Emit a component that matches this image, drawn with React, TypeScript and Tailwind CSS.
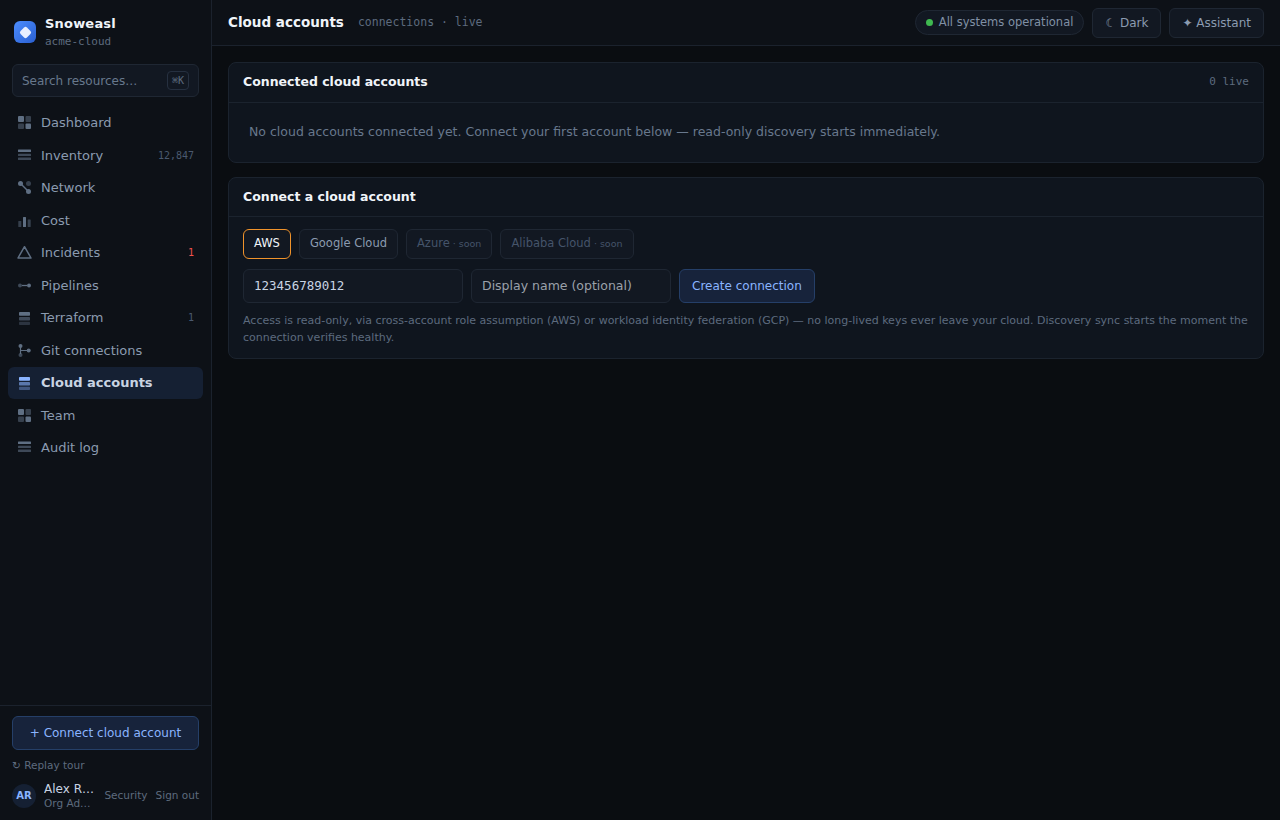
import React from "react";

const mono = "font-['DejaVu_Sans_Mono',monospace]";

function Grid() {
  return (
    <>
      <rect x="1" y="1" width="6" height="6" rx="1" />
      <rect x="8.5" y="1" width="5.5" height="6" rx="1" opacity=".5" />
      <rect x="1" y="8.5" width="6" height="5.5" rx="1" opacity=".5" />
      <rect x="8.5" y="8.5" width="5.5" height="5.5" rx="1" />
    </>
  );
}

function Lines() {
  return (
    <>
      <rect x="1" y="1.5" width="13" height="2.5" rx=".5" />
      <rect x="1" y="5.75" width="13" height="2.25" rx=".5" opacity=".6" />
      <rect x="1" y="9.5" width="13" height="2.5" rx=".5" opacity=".6" />
    </>
  );
}

function Stack() {
  return (
    <>
      <rect x="2" y="2" width="11" height="3.7" rx=".7" />
      <rect x="2" y="7" width="11" height="3.4" rx=".7" opacity=".6" />
      <rect x="2" y="11.8" width="11" height="3.2" rx=".7" opacity=".38" />
    </>
  );
}

function Network() {
  return (
    <>
      <circle cx="3.5" cy="3.5" r="2.5" />
      <circle cx="11.5" cy="3.5" r="2.5" opacity=".5" />
      <circle cx="11.5" cy="11.5" r="2.5" />
      <path d="M3.5 3.5l8 8" stroke="currentColor" strokeWidth="1.4" />
    </>
  );
}

function Bars() {
  return (
    <>
      <rect x="1.3" y="8" width="3" height="6" rx=".5" opacity=".5" />
      <rect x="6" y="4" width="3" height="10" rx=".5" />
      <rect x="10.7" y="6.5" width="3" height="7.5" rx=".5" opacity=".5" />
    </>
  );
}

function Triangle() {
  return <path d="M7.5 1.7L14 13H1z" fill="none" stroke="currentColor" strokeWidth="1.5" strokeLinejoin="round" />;
}

function Pipeline() {
  return (
    <>
      <circle cx="3" cy="7.5" r="2" opacity=".6" />
      <circle cx="12" cy="7.5" r="2" />
      <path d="M5 7.5h5" stroke="currentColor" strokeWidth="1.3" />
    </>
  );
}

function Git() {
  return (
    <>
      <circle cx="3.5" cy="3" r="2" />
      <circle cx="3.5" cy="12" r="2" opacity=".6" />
      <circle cx="11.7" cy="7.5" r="2" />
      <path d="M3.5 4v7M3.5 7.5h7" stroke="currentColor" strokeWidth="1.2" />
    </>
  );
}

type NavItem = { label: string; icon: () => React.ReactElement; count?: string; alert?: boolean; active?: boolean };

const nav: NavItem[] = [
  { label: "Dashboard", icon: Grid },
  { label: "Inventory", icon: Lines, count: "12,847" },
  { label: "Network", icon: Network },
  { label: "Cost", icon: Bars },
  { label: "Incidents", icon: Triangle, count: "1", alert: true },
  { label: "Pipelines", icon: Pipeline },
  { label: "Terraform", icon: Stack, count: "1" },
  { label: "Git connections", icon: Git },
  { label: "Cloud accounts", icon: Stack, active: true },
  { label: "Team", icon: Grid },
  { label: "Audit log", icon: Lines },
];

function Sidebar() {
  return (
    <aside className="flex w-[212px] shrink-0 flex-col border-r border-[#1b222d] bg-[#0d1117]">
      <div className="flex items-center gap-[9px] px-3.5 pt-[14px]">
        <div className="flex size-[22px] items-center justify-center rounded-[6px] bg-linear-to-br from-[#4c8dff] to-[#2a5fd0]">
          <div className="size-[9px] rotate-45 rounded-[2px] bg-[#e8efff]" />
        </div>
        <div>
          <div className="text-[13px] leading-[19.5px] font-bold tracking-[0.2px] text-[#f0f4f9]">Snoweasl</div>
          <div className={`${mono} text-[11px] leading-[16.5px] text-[#5d6b7e]`}>acme-cloud</div>
        </div>
      </div>
      <div className="mx-3 mt-[14px] flex h-[33px] items-center justify-between rounded-[6px] border border-[#1f2733] bg-[#121822] px-[9px]">
        <span className="text-[12px] text-[#68788d]">Search resources…</span>
        <kbd className={`${mono} flex h-[19px] items-center rounded-[4px] border border-[#263040] px-1 text-[10px] text-[#5d6b7e]`}>⌘K</kbd>
      </div>
      <nav className="mt-[10px] flex flex-col gap-px px-2">
        {nav.map(({ label, icon: Icon, count, alert, active }) => (
          <a
            key={label}
            className={`flex h-[31.5px] items-center gap-[9px] rounded-[6px] px-[9px] text-[13px] leading-[19.5px] ${
              active ? "bg-[#152033] font-semibold text-[#c9d4e3]" : "text-[#8b9bb0]"
            }`}
          >
            <svg width="15" height="15" viewBox="0 0 15 15" fill="currentColor" className={active ? "text-[#8ab4ff]" : "text-[#5f6f83]"}>
              <Icon />
            </svg>
            <span className="flex-1">{label}</span>
            {count && <span className={`${mono} text-[10px] ${alert ? "text-[#f0524d]" : "text-[#4a596e]"}`}>{count}</span>}
          </a>
        ))}
      </nav>
      <div className="mt-auto border-t border-[#1b222d] px-3 pt-[10px] pb-[10px]">
        <button className="flex h-[34px] w-full items-center justify-center rounded-[6px] border border-[#253f68] bg-[#17233b] text-[12px] text-[#8ab4ff]">
          + Connect cloud account
        </button>
        <div className="mt-[7px] text-[10.5px] leading-4 text-[#5d6b7e]">↻ Replay tour</div>
        <div className="mt-[9px] flex items-center gap-2">
          <div className="flex size-6 shrink-0 items-center justify-center rounded-full bg-[#152033] pb-px text-[10px] leading-[14px] font-bold text-[#8ab4ff]">AR</div>
          <div className="min-w-0 flex-1">
            <div className="truncate text-[12px] leading-[14px] text-[#c9d4e3]">Alex R…</div>
            <div className="truncate text-[10.5px] leading-[14px] text-[#5d6b7e]">Org Ad…</div>
          </div>
          <span className="text-[10.5px] whitespace-nowrap text-[#5d6b7e]">Security</span>
          <span className="text-[10.5px] whitespace-nowrap text-[#5d6b7e]">Sign out</span>
        </div>
      </div>
    </aside>
  );
}

function Header() {
  return (
    <header className="flex h-[46px] shrink-0 items-center border-b border-[#1b222d] bg-[#0d1117] px-4">
      <h1 className="pb-0.5 text-[13.5px] leading-5 font-bold text-[#f0f4f9]">Cloud accounts</h1>
      <span className={`${mono} ml-3.5 text-[11.5px] text-[#5d6b7e]`}>connections · live</span>
      <div className="ml-auto flex items-center gap-2">
        <div className="flex h-[25px] items-center gap-1.5 rounded-full border border-[#1f2733] bg-[#121822] px-[10px] text-[11.5px] text-[#8090a5]">
          <span className="size-[7px] rounded-full bg-[#3fb950]" />
          All systems operational
        </div>
        <button className="h-[30px] rounded-[6px] border border-[#1f2733] bg-[#121822] px-3 text-[12px] text-[#8b9bb0]">☾ Dark</button>
        <button className="h-[30px] rounded-[6px] border border-[#1f2733] bg-[#121822] px-3 text-[12px] text-[#8b9bb0]">✦ Assistant</button>
      </div>
    </header>
  );
}

export default function App() {
  return (
    <div className="flex h-[820px] bg-[#0a0d11] font-['DejaVu_Sans',sans-serif]">
      <Sidebar />
      <div className="flex min-w-0 flex-1 flex-col">
        <Header />
        <main className="flex flex-col gap-[14px] p-4">
          <section className="h-[101px] rounded-[8px] border border-[#1b232e] bg-[#0f151e]">
            <div className="flex h-[40px] items-center justify-between border-b border-[#1b232e] px-3.5">
              <h2 className="text-[12.5px] font-bold text-[#f0f4f9]">Connected cloud accounts</h2>
              <span className={`${mono} text-[11px] text-[#5d6b7e]`}>0 live</span>
            </div>
            <p className="px-5 pt-[19px] text-[12.5px] leading-[19px] text-[#68788d]">
              No cloud accounts connected yet. Connect your first account below — read-only discovery starts immediately.
            </p>
          </section>
          <section className="h-[182px] rounded-[8px] border border-[#1b232e] bg-[#0f151e]">
            <div className="flex h-[39px] items-center border-b border-[#1b232e] px-3.5">
              <h2 className="text-[12.5px] font-bold text-[#f0f4f9]">Connect a cloud account</h2>
            </div>
            <div className="px-3.5 pt-3">
              <div className="flex gap-2 text-[11.5px]">
                <button className="h-[30px] rounded-[6px] border border-[#f0932b] bg-[#121822] px-[10px] pb-px text-[#f0f4f9]">AWS</button>
                <button className="h-[30px] rounded-[6px] border border-[#1f2733] bg-[#121822] px-[10px] pb-px text-[#8b9bb0]">Google Cloud</button>
                <button className="h-[30px] rounded-[6px] border border-[#1f2733] bg-[#121822] px-[10px] pb-px text-[#45546a]">
                  Azure<span className="text-[9.5px]"> · soon</span>
                </button>
                <button className="h-[30px] rounded-[6px] border border-[#1f2733] bg-[#121822] px-[10px] pb-px text-[#45546a]">
                  Alibaba Cloud<span className="text-[9.5px]"> · soon</span>
                </button>
              </div>
              <div className="mt-[10px] flex gap-2">
                <input defaultValue="123456789012" className={`${mono} h-[34px] w-[220px] rounded-[6px] border border-[#1f2733] bg-[#121822] px-[10px] pb-px text-[12.5px] text-[#c9d4e3]`} />
                <input placeholder="Display name (optional)" className="h-[34px] w-[200px] rounded-[6px] border border-[#1f2733] bg-[#121822] px-[10px] pb-px text-[12.5px] placeholder:text-[#9ba1aa]" />
                <button className="h-[34px] rounded-[6px] border border-[#253f68] bg-[#17233b] px-3 text-[12px] text-[#8ab4ff]">Create connection</button>
              </div>
              <p className="mt-[9px] text-[11px] leading-[17px] text-[#5d6b7e]">
                Access is read-only, via cross-account role assumption (AWS) or workload identity federation (GCP) — no long-lived keys ever leave your cloud. Discovery sync starts the moment the connection verifies healthy.
              </p>
            </div>
          </section>
        </main>
      </div>
    </div>
  );
}
